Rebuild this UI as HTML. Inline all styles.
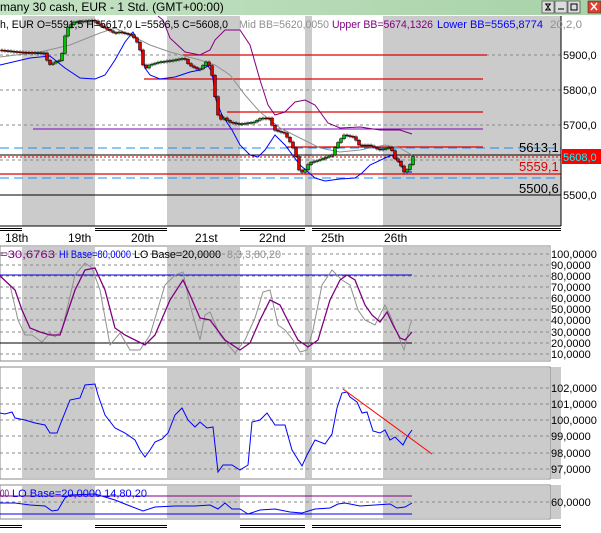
<!DOCTYPE html>
<html><head><meta charset="utf-8"><style>
html,body{margin:0;padding:0;background:#fff;width:601px;height:533px;overflow:hidden}
svg{display:block}
text{font-family:"Liberation Sans",Arial,sans-serif;font-size:11px}
</style></head><body>
<svg id="s" width="601" height="533" viewBox="0 0 601 533" xmlns="http://www.w3.org/2000/svg">
<defs><linearGradient id="tg" x1="0" x2="1"><stop offset="0" stop-color="#c4e2c4"/><stop offset="1" stop-color="#a8d2a8"/></linearGradient></defs>
<rect x="0" y="0" width="601" height="15" fill="url(#tg)"/>
<text x="0" y="11" style="font-size:12px">many 30 cash, EUR - 1 Std. (GMT+00:00)</text>
<g stroke="#333" stroke-width="0.6">
<rect x="542" y="1" width="12" height="12" fill="#dcdcdc"/><rect x="555" y="1" width="12" height="12" fill="#dcdcdc"/><rect x="568" y="1" width="12" height="12" fill="#dcdcdc"/><rect x="588" y="1" width="13" height="12" fill="#e04030"/></g>
<path d="M545 4h6M545 10h6M546 4l4 6M550 4l-4 6M558 9h6M571 4h6v6h-6z" stroke="#000" fill="none"/>
<path d="M591 3l6 7M597 3l-6 7" stroke="#fff" stroke-width="1.5"/>

<rect x="0" y="16" width="561" height="210" fill="#fff"/>
<g fill="#cbcbcb"><rect x="22" y="16" width="73" height="210"/><rect x="167" y="16" width="73" height="210"/><rect x="305" y="16" width="7" height="210"/><rect x="383" y="16" width="178" height="210"/></g>
<g stroke="#888" stroke-dasharray="3,3"><path d="M0 55H561M0 90H561M0 125H561M0 160H561"/></g>
<g stroke="#e00000" stroke-width="1.2"><path d="M183 55H487M144 79H483M227 112H483M287 147H483M0 174H561"/></g>
<path d="M33 129H483" stroke="#8000c0"/>
<g stroke="#1a8cff" stroke-dasharray="9,5"><path d="M0 148H561M0 178H561"/></g>
<path d="M0 155H561M0 195H561" stroke="#000"/>
<path d="M0 157H561" stroke="#e00000" stroke-dasharray="2,2"/>
<polyline fill="none" stroke="#909090" points="0,57 40,52 70,45 100,33 115,28 130,35 150,45 170,52 200,60 215,65 230,75 245,95 260,112 280,128 300,138 320,148 340,152 360,150 385,145 400,148 412,155"/>
<polyline fill="none" stroke="#800080" points="158,16 163,20 170,38 185,52 200,55 210,50 215,40 225,30 240,30 250,45 260,80 268,105 275,115 285,112 295,102 305,100 315,105 328,123 340,128 360,127 380,130 400,130 412,134"/>
<polyline fill="none" stroke="#0000ff" points="0,65 30,58 50,56 65,68 80,78 95,79 105,75 115,60 125,42 133,32 140,45 145,68 150,75 160,79 175,77 190,72 200,70 208,66 212,72 216,100 222,115 232,130 240,145 250,155 258,157 265,150 275,135 285,145 300,165 315,178 325,181 340,179 355,178 362,173 370,165 385,158 392,155 400,163 405,172 412,172"/>
<g id="candles"></g>
<path d="M561 16V226" stroke="#000"/>
<text x="0" y="28" textLength="228" lengthAdjust="spacingAndGlyphs">h, EUR O=5591,5 H=5617,0 L=5586,5 C=5608,0</text>
<text x="239" y="28" fill="#909090" textLength="90" lengthAdjust="spacingAndGlyphs">Mid BB=5620,0050</text>
<text x="332" y="28" fill="#800080" textLength="101" lengthAdjust="spacingAndGlyphs">Upper BB=5674,1326</text>
<text x="437" y="28" fill="#0000ff" textLength="106" lengthAdjust="spacingAndGlyphs">Lower BB=5565,8774</text>
<text x="550" y="28" fill="#909090" textLength="32" lengthAdjust="spacingAndGlyphs">20,2,0</text>
<text x="519" y="152" style="font-size:13px">5613,1</text><text x="519" y="171" fill="#e00000" style="font-size:13px">5559,1</text><text x="519" y="193" style="font-size:13px">5500,6</text>
<text x="563" y="59">5900,0</text><text x="563" y="94">5800,0</text><text x="563" y="129">5700,0</text><text x="563" y="199">5500,0</text>
<rect x="562" y="149" width="39" height="15" fill="#ff0000"/><text x="563" y="161" fill="#00ffff">5608,0</text>

<path d="M0 226H561" stroke="#000"/>
<g stroke="#000"><path d="M0 228.5H22M0 230.5H22M95 228.5H167M95 230.5H167M240 228.5H305M240 230.5H305M312 228.5H561M312 230.5H561"/></g>
<text x="5" y="242" style="font-size:12px">18th</text><text x="68" y="242" style="font-size:12px">19th</text><text x="131" y="242" style="font-size:12px">20th</text><text x="195" y="242" style="font-size:12px">21st</text><text x="259" y="242" style="font-size:12px">22nd</text><text x="321" y="242" style="font-size:12px">25th</text><text x="384" y="242" style="font-size:12px">26th</text>

<rect x="0" y="246" width="550" height="115" fill="#fff" stroke="#888"/>
<g fill="#cbcbcb"><rect x="22" y="247" width="73" height="113"/><rect x="167" y="247" width="73" height="113"/><rect x="305" y="247" width="7" height="113"/><rect x="383" y="247" width="167" height="113"/></g>
<g stroke="#888" stroke-dasharray="3,3"><path d="M0 254H550M0 265H550M0 276H550M0 287H550M0 298H550M0 309H550M0 320H550M0 332H550M0 343H550M0 354H550"/></g>
<path d="M0 275H412" stroke="#0000dd"/><path d="M0 343H412" stroke="#000"/>
<polyline fill="none" stroke="#909090" points="0,276 10,285 18,320 25,335 32,335 42,342 50,333 55,337 62,330 68,305 75,275 85,263 92,268 100,290 110,345 120,333 130,350 140,350 150,335 165,285 175,275 183,272 190,305 200,340 205,315 210,312 220,335 235,353 245,340 255,318 263,292 270,290 278,325 285,330 293,340 300,352 307,350 313,330 322,285 332,270 342,280 350,285 358,310 365,320 375,325 385,305 390,315 398,335 404,350 410,325 412,320"/>
<polyline fill="none" stroke="#800080" stroke-width="1.3" points="0,276 15,290 22,310 30,328 40,332 50,335 60,335 65,320 75,290 85,270 95,268 105,290 115,328 125,335 135,340 145,345 155,335 170,300 183,280 190,295 200,318 210,320 225,340 240,350 250,343 260,320 270,300 280,305 290,325 298,340 308,347 318,340 330,300 340,280 347,275 355,280 365,305 372,315 380,322 387,312 393,325 400,338 405,340 412,332"/>
<text x="0" y="258" fill="#800080" textLength="55" lengthAdjust="spacingAndGlyphs">=30,6763</text><text x="59" y="258" fill="#0000ff" textLength="72" lengthAdjust="spacingAndGlyphs">HI Base=80,0000</text><text x="134" y="258" textLength="87" lengthAdjust="spacingAndGlyphs">LO Base=20,0000</text><text x="227" y="258" fill="#909090" textLength="54" lengthAdjust="spacingAndGlyphs">8,3,3,80,20</text>
<text x="551" y="258">100,0000</text><text x="551" y="269">90,0000</text><text x="551" y="280">80,0000</text><text x="551" y="291">70,0000</text><text x="551" y="302">60,0000</text><text x="551" y="313">50,0000</text><text x="551" y="324">40,0000</text><text x="551" y="336">30,0000</text><text x="551" y="347">20,0000</text><text x="551" y="358">10,0000</text>

<rect x="550" y="367" width="11" height="112" fill="#cbcbcb"/>
<rect x="0" y="367" width="550" height="112" fill="#fff" stroke="#888"/>
<g fill="#cbcbcb"><rect x="22" y="368" width="73" height="110"/><rect x="167" y="368" width="73" height="110"/><rect x="305" y="368" width="7" height="110"/><rect x="383" y="368" width="167" height="110"/></g>
<g stroke="#888" stroke-dasharray="3,3"><path d="M0 388H550M0 404H550M0 420H550M0 436H550M0 453H550M0 469H550"/></g>
<polyline fill="none" stroke="#0000ff" points="0,413 5,414 12,412 15,418 25,420 35,423 45,425 50,433 57,433 62,420 70,400 80,398 85,385 95,384 98,395 105,415 115,428 125,433 135,440 140,450 145,457 150,450 155,442 162,439 168,433 175,415 182,408 188,420 195,427 200,422 207,428 213,427 218,472 223,465 232,465 240,470 248,465 252,422 260,420 267,413 275,425 285,425 292,450 302,466 307,455 315,440 325,444 332,434 337,408 342,393 347,392 350,397 357,402 362,413 367,412 373,431 380,433 385,430 390,440 395,437 403,445 407,437 412,430"/>
<path d="M343 389L432 454" stroke="#ff0000"/>
<text x="551" y="392">102,0000</text><text x="551" y="408">101,0000</text><text x="551" y="424">100,0000</text><text x="551" y="440">99,0000</text><text x="551" y="457">98,0000</text><text x="551" y="473">97,0000</text>

<rect x="550" y="485" width="11" height="34" fill="#cbcbcb"/>
<rect x="0" y="485" width="550" height="34" fill="#fff" stroke="#888"/>
<g fill="#cbcbcb"><rect x="22" y="486" width="73" height="32"/><rect x="167" y="486" width="73" height="32"/><rect x="305" y="486" width="7" height="32"/><rect x="383" y="486" width="167" height="32"/></g>
<path d="M0 502H550" stroke="#888" stroke-dasharray="3,3"/>
<path d="M0 496H412" stroke="#800080"/><path d="M0 514H412" stroke="#0000ff"/>
<polyline fill="none" stroke="#0000ff" points="0,503 15,503 30,505 45,506 52,511 58,510 65,498 70,495 95,494 105,497 115,500 125,504 143,511 155,507 175,506 195,506 210,505 218,509 225,503 232,509 240,509 248,514 260,510 275,509 290,512 302,513 315,509 330,508 338,504 345,503 360,506 375,505 390,504 397,508 405,507 412,503"/>
<text x="0" y="497" fill="#800080" textLength="9" lengthAdjust="spacingAndGlyphs">00</text><text x="12" y="497" fill="#0000ff" textLength="135" lengthAdjust="spacingAndGlyphs">LO Base=20,0000  14,80,20</text>
<text x="551" y="506">60,0000</text>
<g stroke="#000"><path d="M0 525.5H22M0 527.5H22M95 525.5H167M95 527.5H167M240 525.5H305M240 527.5H305M312 525.5H561M312 527.5H561"/></g>
</svg>
<script>
(function(){
var pts=[[0,50],[20,52],[45,53],[50,65],[56,62],[62,60],[65,40],[68,28],[75,22],[95,20],[100,25],[115,33],[120,32],[133,35],[140,45],[145,70],[150,65],[160,62],[175,60],[185,58],[190,65],[200,70],[207,62],[212,68],[215,90],[218,110],[220,120],[225,118],[230,122],[240,124],[255,122],[262,118],[270,118],[275,130],[285,133],[290,140],[296,152],[300,170],[304,173],[310,163],[320,160],[333,155],[337,145],[345,135],[355,137],[360,145],[370,145],[380,150],[392,147],[395,158],[400,162],[405,172],[410,168],[413,158],[415,155]];
function yAt(x){for(var i=1;i<pts.length;i++){if(x<=pts[i][0]){var a=pts[i-1],b=pts[i];return a[1]+(b[1]-a[1])*(x-a[0])/(b[0]-a[0]);}}return pts[pts.length-1][1];}
var g=document.getElementById('candles'),h='';
var prev=yAt(0);
for(var x=3;x<=415;x+=3){var y=yAt(x);var top=Math.min(prev,y),ht=Math.max(1,Math.abs(y-prev));
var col=y<prev?'#00c000':'#e00000';
h+='<line x1="'+(x-1)+'" x2="'+(x-1)+'" y1="'+(top-1.5)+'" y2="'+(top+ht+1.5)+'" stroke="#000" stroke-width="0.6"/>';
h+='<rect x="'+(x-2.5)+'" y="'+top+'" width="3" height="'+ht+'" fill="'+col+'" stroke="#000" stroke-width="0.5"/>';
prev=y;}
g.innerHTML=h;
})();
</script>
</body></html>
